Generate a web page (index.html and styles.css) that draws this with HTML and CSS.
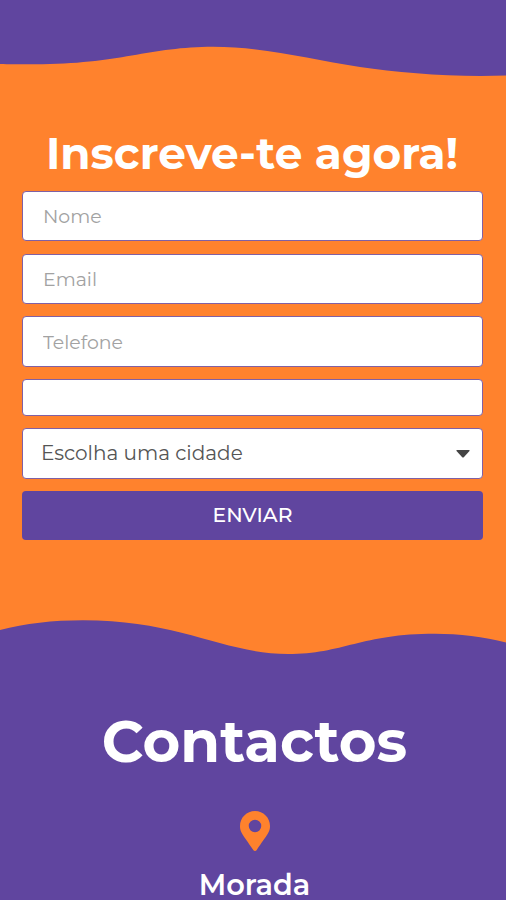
FILE: index.html
```html
<!DOCTYPE html>
<html lang="pt">
<head>
<meta charset="utf-8">
<meta name="viewport" content="width=device-width, initial-scale=1">
<title>Inscreve-te agora!</title>
<link rel="stylesheet" href="styles.css">
</head>
<body>
<section class="signup">
  <svg class="wave" viewBox="0 0 506 80" aria-hidden="true"><path d="M0 0H506V75.5C455 77.5 400 73 360 67C310 59.500 265 46.800 213 46.800C150 46.800 119 64.300 35 64.300C20 64.300 8 64.300 0 64Z"/></svg>
  <h2 class="signup-title"><span>Inscreve-te agora!</span></h2>
  <form class="form">
    <input class="field" type="text" placeholder="Nome" aria-label="Nome">
    <input class="field field-email" type="email" placeholder="Email" aria-label="Email">
    <input class="field field-phone" type="tel" placeholder="Telefone" aria-label="Telefone">
    <div class="field field-empty"></div>
    <div class="field select"><span>Escolha uma cidade</span><svg class="caret" viewBox="0 0 14 8" aria-hidden="true"><path d="M1 0H13Q14 0 13.500 1L8 7Q7 8 6 7L.5 1Q0 0 1 0Z"/></svg></div>
    <button class="submit" type="button"><span>ENVIAR</span></button>
  </form>
  <svg class="wave wave-bottom" viewBox="0 0 506 45" aria-hidden="true"><path d="M0 45V20C25 13.500 53 10.300 83 10.300C181 10.300 224 44 288 44C343 44 361 23.700 435 23.700C459 23.700 484 27 506 32.500V45Z"/></svg>
</section>
<section class="contacts">
  <h2 class="contacts-title"><span>Contactos</span></h2>
  <svg class="pin" viewBox="0 0 384 512" aria-hidden="true"><path fill-rule="evenodd" d="M172.300 501.700C27 291 0 269.400 0 192C0 86 86 0 192 0s192 86 192 192c0 77.400-27 99-172.300 309.700c-9.500 13.800-29.900 13.800-39.400 0zM192 272a80 80 0 1 0 0-160a80 80 0 0 0 0 160z"/></svg>
  <h3 class="contact-label"><span>Morada</span></h3>
</section>
</body>
</html>
```

FILE: styles.css
```css
* { box-sizing: border-box; }
body {
  margin: 0;
  height: 900px;
  overflow: hidden;
  background: #60459f;
  color: #fff;
  font-family: Montserrat, Inter, sans-serif;
}
h2, h3 { margin: 0; text-align: center; white-space: nowrap; }
.signup { height: 655px; background: #ff822d; display: flex; flex-direction: column; }
.wave { display: block; width: 100%; height: 80px; flex: none; fill: #60459f; }
.wave-bottom { height: 45px; margin-top: auto; }
.signup-title { margin-top: 47px; height: 64px; padding-right: 2px; font-size: 43.800px; line-height: 54px; font-weight: 700; }
.form { display: flex; flex-direction: column; gap: 12.400px; padding: 0 23px 0 22px; }
.field {
  width: 100%;
  height: 50.2px;
  padding: 0 20px;
  border: 1px solid #8060a4;
  border-radius: 4px;
  background: #fff;
  font: 400 18.900px/24px Montserrat, Inter, sans-serif;
  outline: 0;
}
.field-email { padding-top: 1px; }
.field-phone { height: 50.400px; padding-top: 2px; }
.field::placeholder { color: #a2a2a2; opacity: 1; }
.field-empty { height: 37px; }
.select { display: flex; align-items: center; justify-content: space-between; padding: 0 12px 1px 18px; color: #555; font-size: 20px; }
.caret { width: 14px; height: 8px; margin-top: 3px; fill: #444; }
.submit { height: 49.500px; border: 0; border-radius: 4px; background: #60459f; color: #fff; font: 500 20.300px/24px Montserrat, Inter, sans-serif; padding: 0 0 1px; }
.contacts { display: flex; flex-direction: column; align-items: center; padding: 51px 0 0 3px; }
.contacts-title { font-size: 57.700px; line-height: 70px; font-weight: 700; }
.pin { display: block; width: 30px; height: 40px; margin-top: 35px; fill: #ff822d; }
.contact-label { margin-top: 16px; font-size: 28.800px; line-height: 36px; font-weight: 600; }
```
